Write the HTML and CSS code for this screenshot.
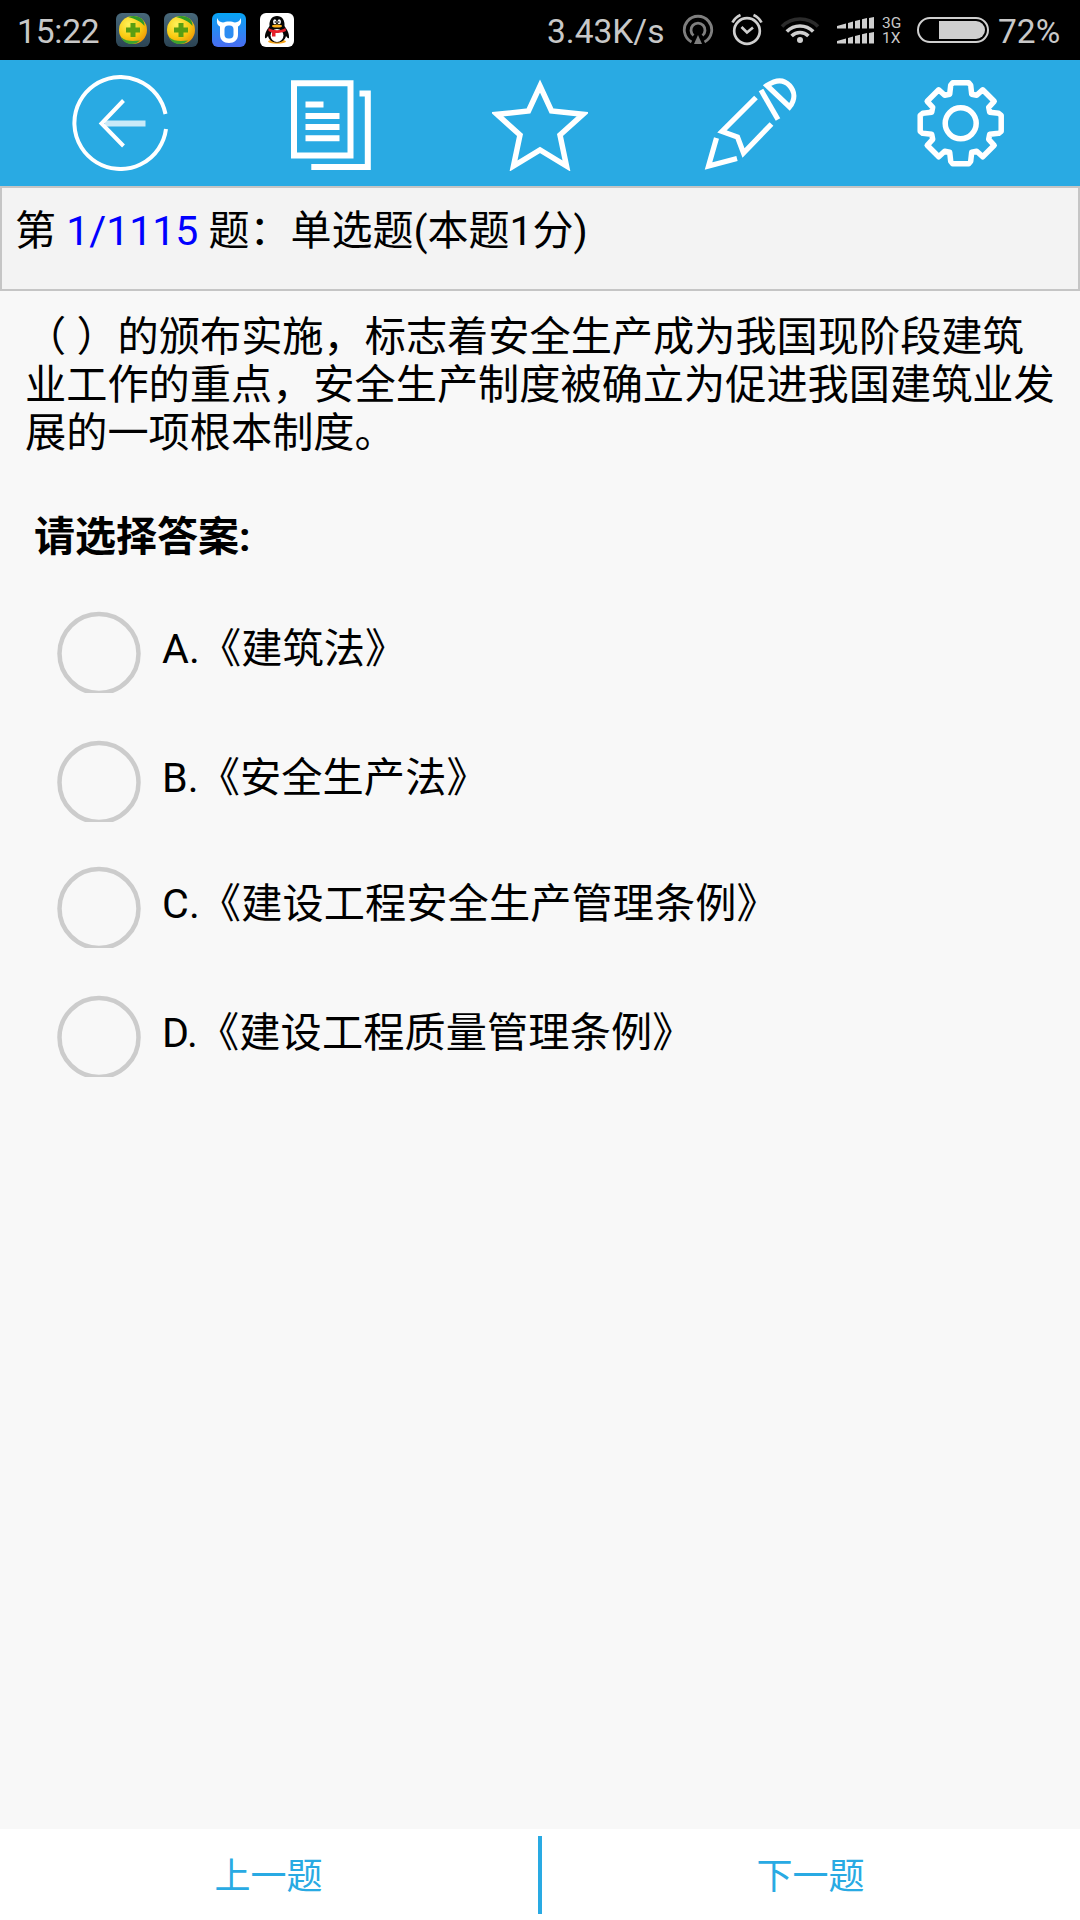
FILE: index.html
```
<!DOCTYPE html>
<html lang="zh-CN">
<head>
    <meta charset="UTF-8">
    <meta name="viewport" content="width=device-width, initial-scale=1.0">
    <title>单选题</title>
    <link rel="stylesheet" href="styles.css">
</head>
<body>
    <div class="status-bar">
        <span class="clock">15:22</span>
        <div class="app-icons">
            <svg class="app-icon" viewBox="0 0 34 34">
                <defs>
                    <linearGradient id="slate" x1="0" y1="0" x2="0" y2="1">
                        <stop offset="0" stop-color="#48687a"/>
                        <stop offset="1" stop-color="#2b4353"/>
                    </linearGradient>
                    <radialGradient id="gold" cx=".35" cy=".3" r=".75">
                        <stop offset="0" stop-color="#fff25a"/>
                        <stop offset=".6" stop-color="#f8cb12"/>
                        <stop offset="1" stop-color="#ee9a08"/>
                    </radialGradient>
                </defs>
                <g id="safe-ball">
                    <rect width="34" height="34" rx="6" fill="url(#slate)"/>
                    <circle cx="17" cy="17" r="14" fill="url(#gold)"/>
                    <path d="M12 4c7-3 17 0 16.500 9-4-5-9-7-16.500-9z" fill="#2f9a28"/>
                    <path d="M5 24c5 5 13 4 19 3.500-6 6-16 4-19-3.500z" fill="#3da32e"/>
                    <path d="M14.500 10h5v4.500h4.500v5h-4.500v4.500h-5v-4.500h-4.500v-5h4.500z" fill="#5a9e12"/>
                </g>
            </svg>
            <svg class="app-icon" viewBox="0 0 34 34"><use href="#safe-ball"/></svg>
            <svg class="app-icon" viewBox="0 0 34 34">
                <defs>
                    <linearGradient id="sky" x1="0" y1="0" x2="0" y2="1">
                        <stop offset="0" stop-color="#06a4f4"/>
                        <stop offset="1" stop-color="#4a6cf0"/>
                    </linearGradient>
                </defs>
                <rect width="34" height="34" rx="6" fill="url(#sky)"/>
                <path d="M5.500 5c.5 3 2.500 4 5.500 4.500 3-1.500 9-1.500 12 0 3-.5 5-1.500 5.500-4.500 1.500 4 0 7.500-2.500 8.500v8c0 5.500-3.500 8.500-9 8.500s-9-3-9-8.500v-8c-2.500-1-4-4.500-2.500-8.500z" fill="#fff"/>
                <rect x="12.500" y="12.500" width="9" height="13" rx="4" fill="#2c8cf2"/>
            </svg>
            <svg class="app-icon" viewBox="0 0 34 34">
                <rect width="34" height="34" rx="6" fill="#fff"/>
                <ellipse cx="17" cy="28.500" rx="9" ry="2.200" fill="#f9a61a"/>
                <path d="M17 3c-5 0-8 4-7.500 10-2 3-5 7-4.500 12 1 1 2-1 3-2 1 4 4 6.500 9 6.500s8-2.500 9-6.500c1 1 2 3 3 2 .5-5-2.500-9-4.500-12 .5-6-2.500-10-7.500-10z" fill="#050505"/>
                <ellipse cx="17" cy="22.500" rx="6.500" ry="6.500" fill="#fff"/>
                <ellipse cx="14.800" cy="8.700" rx="1.700" ry="2.500" fill="#fff"/>
                <ellipse cx="19.200" cy="8.700" rx="1.700" ry="2.500" fill="#fff"/>
                <circle cx="15.300" cy="9" r=".8"/>
                <circle cx="18.800" cy="9" r=".8"/>
                <ellipse cx="17" cy="13" rx="5" ry="1.500" fill="#fbb01c"/>
                <path d="M8.500 15c5 3 12 3 17 0l.5 3c-3 1.500-7 2-10.500 2v3.500h-3.500v-4l-3.500-1.500z" fill="#e5202a"/>
            </svg>
        </div>

        <span class="speed">3.43K/s</span>
        <svg class="podcast" width="32" height="32" viewBox="0 0 32 32" fill="none" stroke="#7f7f7f" stroke-width="2.800">
            <path d="M9.500 28a13.700 13.700 0 1 1 13 0"/>
            <path d="M11.500 21.500a7 7 0 1 1 9 0"/>
            <path d="M16 21l4 9h-8z" fill="#7f7f7f" stroke="none"/>
        </svg>
        <svg class="alarm" width="34" height="34" viewBox="0 0 34 34" fill="none" stroke="#cfcfcf" stroke-width="2.700">
            <circle cx="17" cy="19" r="12.800"/>
            <path d="M11.500 15l5.500 5.500 6-5"/>
            <path d="M2.500 10.500q2.500-5 8-7.500M31.500 10.500q-2.500-5-8-7.500"/>
        </svg>
        <svg class="wifi" width="40" height="28" viewBox="0 0 40 28" fill="none" stroke="#cfcfcf" stroke-width="3.600">
            <path d="M2 10.500a25.500 25.500 0 0 1 36 0" stroke="#2b2b2b"/>
            <path d="M6.800 15.500a18.600 18.600 0 0 1 26.400 0"/>
            <path d="M11.600 20a12 12 0 0 1 16.800 0"/>
            <circle cx="20" cy="24" r="3" fill="#cfcfcf" stroke="none"/>
        </svg>
        <svg class="signal" width="37" height="27" viewBox="0 0 37 27" fill="#cfcfcf">
            <g id="bars">
                <path d="M0 9l9-2.500v5h-9zM11 6l5-1.500v7h-5zM18 4l5-1.300v8.800h-5zM25 2.300l5-1.200v10.400h-5zM32 1l5-1v11.500h-5z"/>
            </g>
            <use href="#bars" y="15"/>
        </svg>
        <div class="network">
            <span>3G</span>
            <span>1X</span>
        </div>
        <div class="battery"><div class="battery-level"></div></div>
        <span class="percent">72%</span>
    </div>

    <div class="toolbar">
        <svg class="tool" viewBox="0 0 96 96" stroke-width="4">
            <path d="M93.500 39A46 46 0 1 0 94 54"/>
            <path d="M33 48.500h40.500" stroke-width="6" opacity=".75"/>
            <path d="M51.500 25.500l-22 23 22 22.500"/>
        </svg>
        <svg class="tool" viewBox="0 0 96 96" stroke-width="6">
            <path d="M12 8.200h56.500v72.200h-56.500z"/>
            <path d="M23.500 29.500h18M23.500 41h34M23.500 52h34M23.500 63.300h34"/>
            <path d="M77.500 18.500h8.300v73.500h-56.500"/>
        </svg>
        <svg class="tool" viewBox="0 0 96 96" stroke-width="5.500">
            <path d="M48 11l11.500 25 31.500 3.300-23 20.700 6.500 31-26.500-16-26.500 16 6.500-31-23-20.700 31.500-3.300z"/>
        </svg>
        <svg class="tool" viewBox="0 0 96 96" stroke-width="5.200">
            <path d="M14.500 63l-8 28 28.500-7.500"/>
            <path d="M54 22.500l-34 34 15.500 5.500 6 16 28-29"/>
            <path d="M59 15l17 29.500"/>
            <path d="M65 10.500c9-6 17-6 22.500 0s6 14 0 21.500z"/>
        </svg>
        <svg class="tool" viewBox="0 0 96 96" stroke-width="5.500" stroke-linejoin="round">
            <circle cx="48.700" cy="48.300" r="15.500"/>
            <path transform="translate(48.700 48.300)" d="M-11-29L-10-38-8-40.500H8L10-38 11-29 16-28 22-33.500 33.500-22 28-16 29-11 38-10 40.500-8V8L38 10 29 11 28 16 33.500 22 22 33.500 16 28 11 29 10 38 8 40.500H-8L-10 38-11 29-16 28-22 33.500-33.500 22-28 16-29 11-38 10-40.500 8V-8L-38-10-29-11-28-16-33.500-22-22-33.500-16-28z"/>
        </svg>
    </div>

    <div class="info">第 <span class="counter">1/1115</span> 题：单选题(本题1分)</div>

    <div class="content">
        <p class="question">（ ）的颁布实施，标志着安全生产成为我国现阶段建筑<br>业工作的重点，安全生产制度被确立为促进我国建筑业发<br>展的一项根本制度。</p>
        <h3>请选择答案:</h3>
        <div class="options">
            <div class="option">
                <svg class="radio" viewBox="0 0 86 82"><circle cx="43" cy="42.500" r="39.500"/></svg>
                <span>A.《建筑法》</span>
            </div>
            <div class="option">
                <svg class="radio" viewBox="0 0 86 82"><circle cx="43" cy="42.500" r="39.500"/></svg>
                <span>B.《安全生产法》</span>
            </div>
            <div class="option">
                <svg class="radio" viewBox="0 0 86 82"><circle cx="43" cy="42.500" r="39.500"/></svg>
                <span>C.《建设工程安全生产管理条例》</span>
            </div>
            <div class="option">
                <svg class="radio" viewBox="0 0 86 82"><circle cx="43" cy="42.500" r="39.500"/></svg>
                <span>D.《建设工程质量管理条例》</span>
            </div>
        </div>
    </div>

    <div class="footer">
        <a class="prev">上一题</a>
        <div class="divider"></div>
        <a class="next">下一题</a>
    </div>
</body>
</html>
```
FILE: styles.css
```
* {
    box-sizing: border-box;
}
body {
    margin: 0;
    height: 1920px;
    display: flex;
    flex-direction: column;
    background-color: #f8f8f8;
    color: #000;
    font-family: Roboto, "Noto Sans CJK SC", sans-serif;
    font-size: 41.2px;
    line-height: 48px;
    overflow: hidden;
}
svg {
    display: block;
    flex: none;
}

/* status bar */
.status-bar {
    height: 60px;
    flex: none;
    display: flex;
    align-items: center;
    background: #000;
    color: #c8c8c8;
    font-size: 33.5px;
    white-space: nowrap;
}
.clock {
    width: 98px;
    padding-left: 17px;
    padding-top: 3px;
    letter-spacing: -0.2px;
}
.app-icons {
    display: flex;
    gap: 14px;
    margin-left: 18px;
}
.app-icon {
    width: 34px;
    height: 34px;
}
.speed {
    width: 118px;
    margin-left: 253px;
    padding-top: 3px;
}
.podcast {
    margin-left: 17px;
}
.alarm {
    margin-left: 16px;
    margin-bottom: 3px;
}
.wifi {
    margin-left: 16px;
}
.signal {
    margin-left: 17px;
}
.network {
    width: 22px;
    margin-left: 8px;
    padding-top: 1px;
    font-size: 15.5px;
    line-height: 15px;
}
.network span {
    display: block;
}
.battery {
    width: 72px;
    height: 26px;
    margin-left: 13px;
    padding: 2px;
    border: 2px solid #cfcfcf;
    border-radius: 13px;
}
.battery-level {
    width: 46px;
    height: 18px;
    margin-left: auto;
    background: #cfcfcf;
    border-radius: 0 9px 9px 0;
}
.percent {
    margin-left: 9px;
    padding-top: 3px;
}

/* toolbar */
.toolbar {
    height: 126px;
    flex: none;
    display: flex;
    justify-content: space-between;
    padding: 15px 72px;
    background: #29aae3;
}
.tool {
    width: 96px;
    height: 96px;
    fill: none;
    stroke: #fff;
}

.info {
    height: 105px;
    flex: none;
    padding: 19px 13px;
    background: #f3f3f3;
    border: 2px solid #c5c5c5;
    font-size: 41px;
}
.counter {
    color: #0000ff;
}

/* question */
.content {
    flex: 1;
    padding: 22px 25px 0;
}
.question {
    margin: 0;
    white-space: nowrap;
}
h3 {
    margin: 56px 0 0 9px;
    font-size: 41px;
    font-weight: bold;
}
.options {
    margin: 50px 0 0 31px;
}
.option {
    display: flex;
    height: 129px;
    letter-spacing: 0.1px;
}
.option:nth-child(even) {
    height: 126px;
}
.radio {
    width: 86px;
    height: 82px;
    margin-right: 20px;
    fill: none;
    stroke: #cccccc;
    stroke-width: 4.5;
}
.option span {
    padding-top: 14px;
}

/* footer */
.footer {
    height: 91px;
    flex: none;
    display: flex;
    padding: 7px 0 6px;
    background: #fff;
    color: #29aae3;
    font-size: 36px;
    text-align: center;
}
.footer a {
    flex: 1;
    padding-top: 17px;
    text-indent: -1px;
}
.divider {
    width: 4px;
    background: #29aae3;
}
```
